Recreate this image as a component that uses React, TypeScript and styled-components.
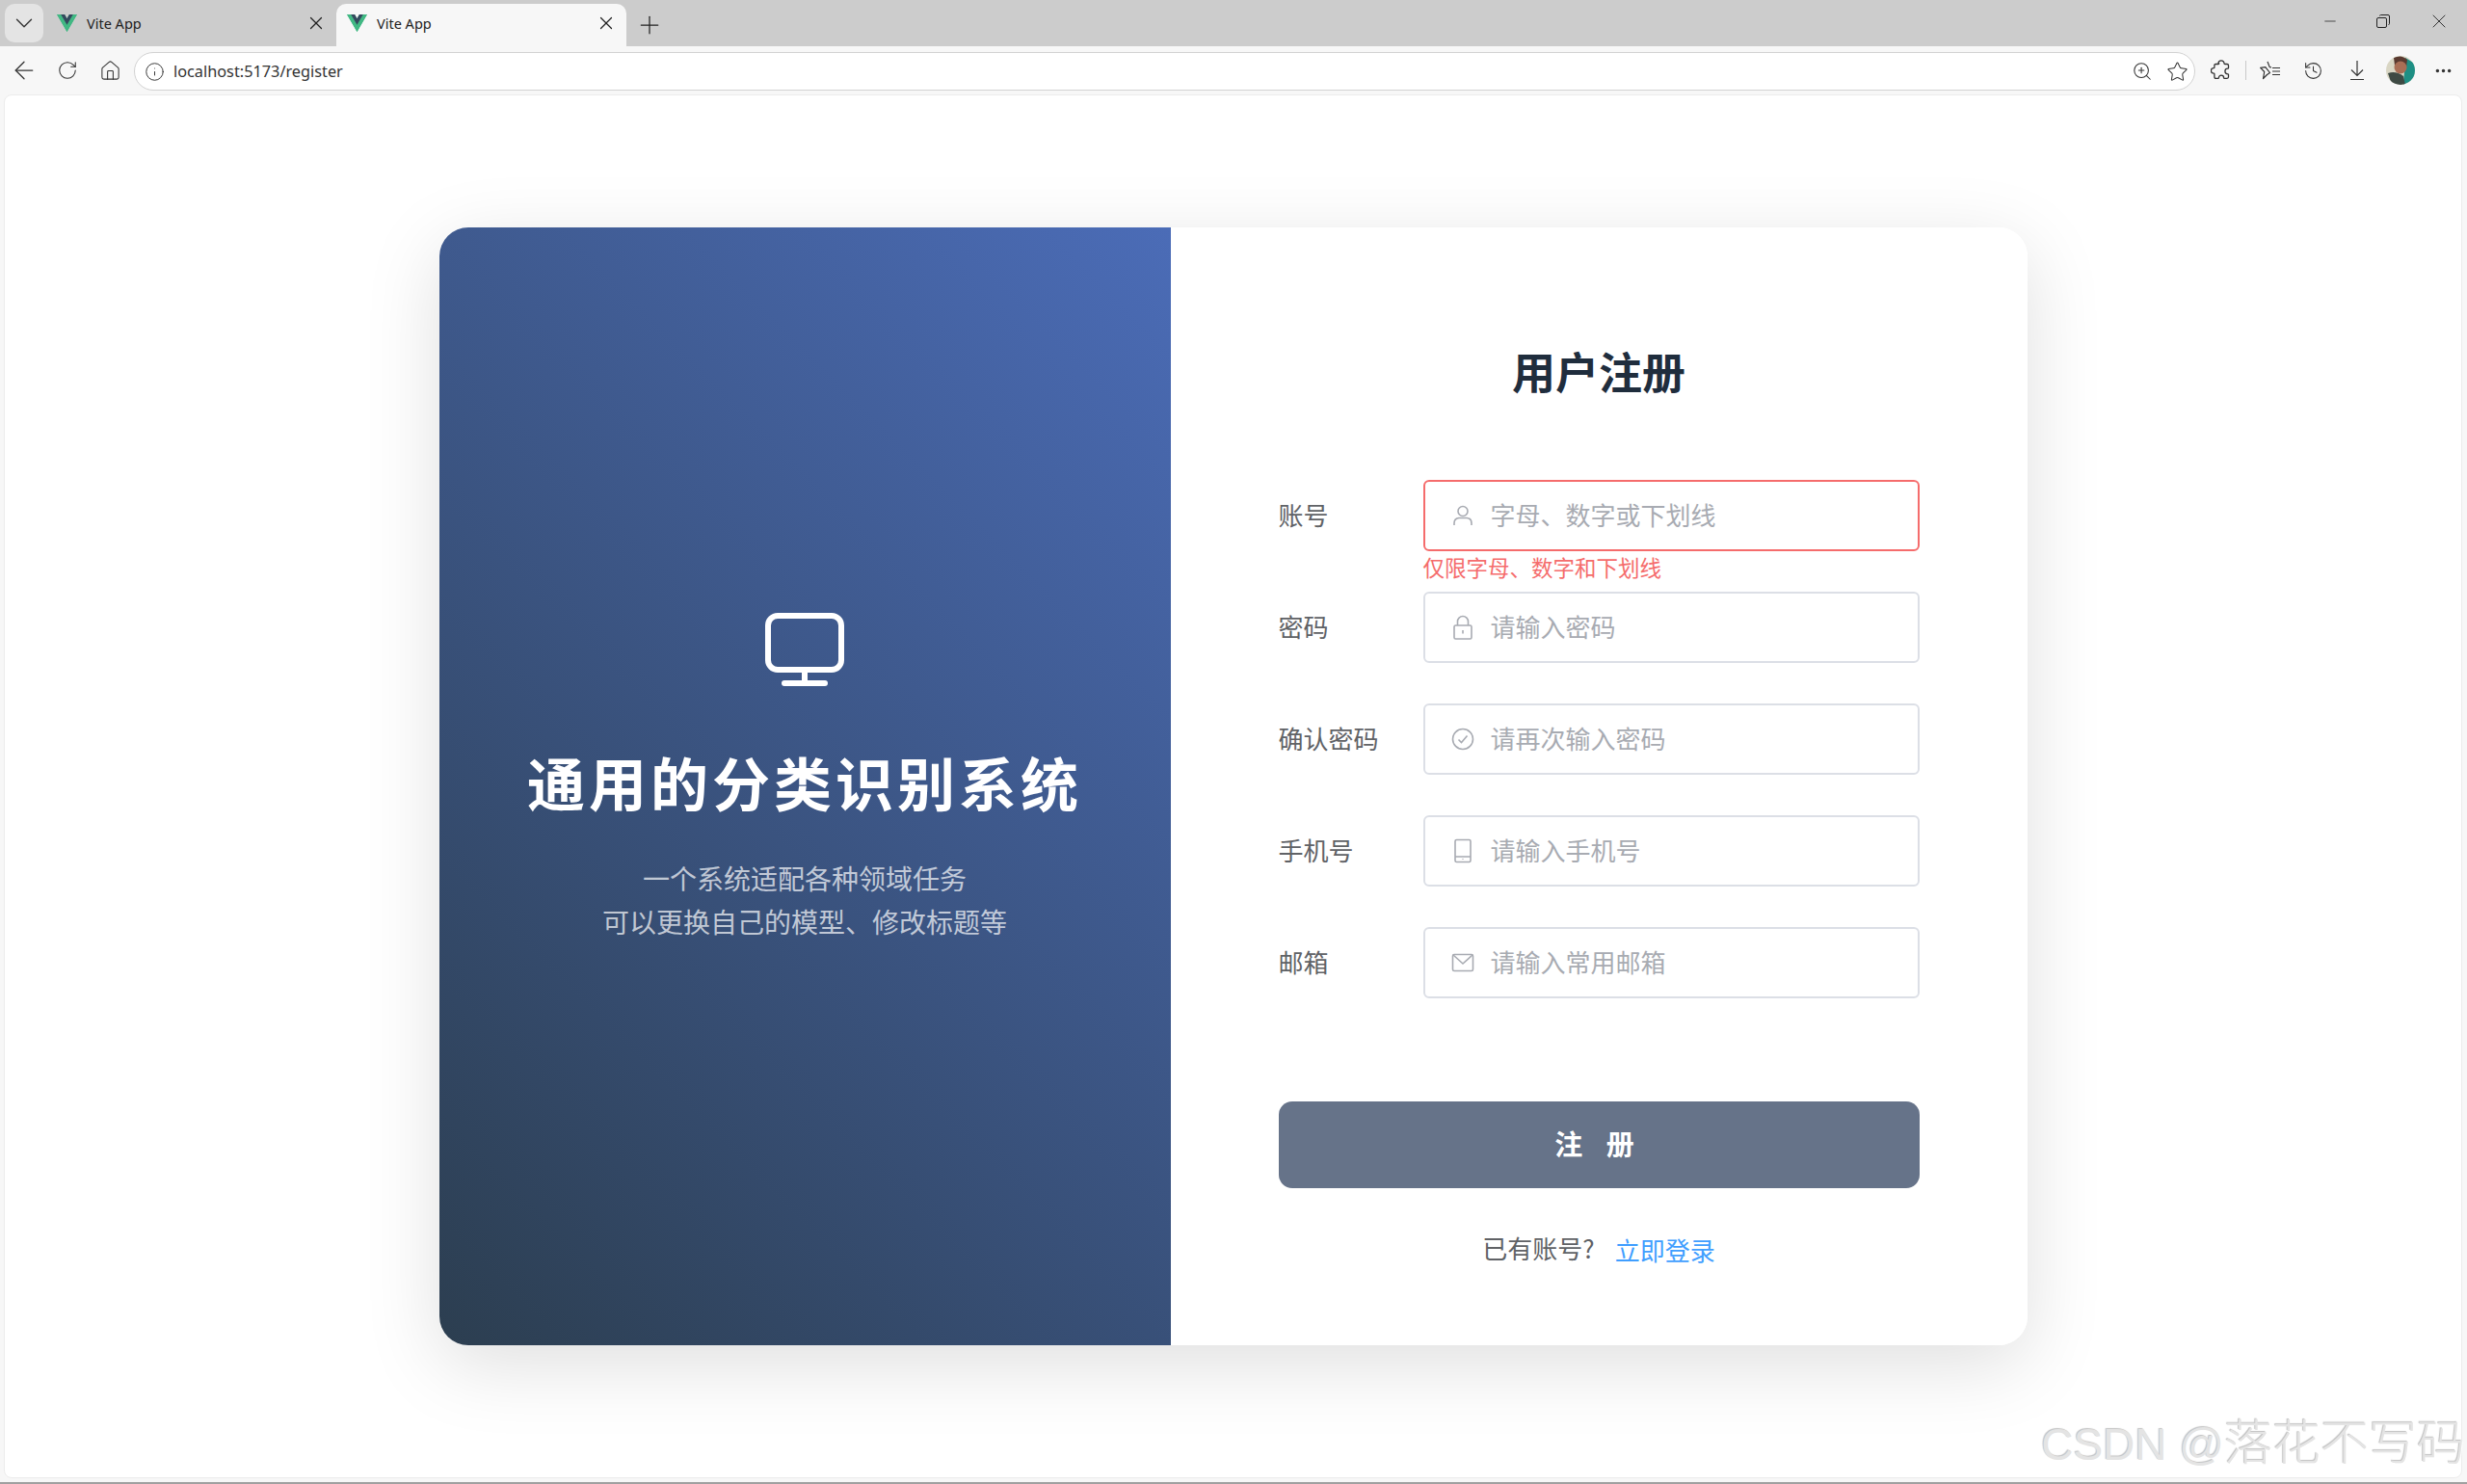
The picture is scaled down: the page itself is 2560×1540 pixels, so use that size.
import React from 'react';
import styled, { createGlobalStyle } from 'styled-components';
import {
  ChevronDown,
  Ellipsis,
  History,
  House,
  Info,
  Minus,
  Plus,
  RotateCw,
  Star,
  X,
  ZoomIn,
  ArrowLeft,
} from 'lucide-react';

const CJK = `"Noto Sans CJK SC", "Noto Sans", sans-serif`;

const GlobalStyle = createGlobalStyle`
  html, body {
    margin: 0;
    padding: 0;
    background: #f7f7f7;
  }
  * {
    box-sizing: border-box;
  }
`;

const Window = styled.div`
  width: 2560px;
  height: 1540px;
  display: flex;
  flex-direction: column;
  overflow: hidden;
  position: relative;
  font-family: ${CJK};
  background: #f7f7f7;
  border-bottom: 2px solid #a0a0a0;
`;

/* browser chrome */
const TabStrip = styled.div`
  height: 48px;
  flex: none;
  background: #cccccc;
  display: flex;
  align-items: flex-end;
  padding-left: 5px;
`;

const TabMenu = styled.div`
  width: 40px;
  height: 40px;
  margin-bottom: 4px;
  margin-right: 3px;
  border-radius: 10px;
  background: #e4e4e4;
  color: #333;
  display: flex;
  align-items: center;
  justify-content: center;
`;

const Tab = styled.div<{ $active?: boolean }>`
  width: 301px;
  height: 44px;
  padding: 0 10px 4px 11px;
  border-radius: 10px 10px 0 0;
  background: ${(p) => (p.$active ? '#f7f7f7' : 'transparent')};
  display: flex;
  align-items: center;
  color: #222;
  font-family: "Noto Sans", sans-serif;
  font-size: 14.5px;
`;

const TabTitle = styled.span`
  margin-left: 10px;
  flex: 1;
`;

const NewTab = styled.div`
  width: 48px;
  height: 44px;
  display: flex;
  align-items: center;
  justify-content: center;
  color: #222;
`;

const WindowButtons = styled.div`
  margin-left: auto;
  height: 48px;
  display: flex;
  align-items: center;
  padding-right: 17px;
  padding-bottom: 4px;
  gap: 38px;
  color: #222;
`;

const Toolbar = styled.div`
  height: 50px;
  flex: none;
  display: flex;
  align-items: center;
  padding-left: 2px;
  color: #333;
`;

const ToolButton = styled.div<{ $w?: number }>`
  width: ${(p) => p.$w || 45}px;
  height: 40px;
  flex: none;
  display: flex;
  align-items: center;
  justify-content: center;
  color: #333;
`;

const NavButtons = styled.div`
  display: flex;
  width: 137px;
  flex: none;
`;

const AddressBar = styled.div`
  width: 2139px;
  height: 40px;
  margin-top: 2px;
  flex: none;
  background: #fff;
  border: 1px solid #d2d2d2;
  border-radius: 20px;
  display: flex;
  align-items: center;
  padding: 0 0 0 10px;
  font-family: "Noto Sans", sans-serif;
  font-size: 16.3px;
  color: #333;
`;

const Url = styled.span`
  margin-left: 9px;
  flex: 1;
`;

const ToolDivider = styled.div`
  width: 1px;
  height: 20px;
  background: #c8c8c8;
  margin: 0 2px 0 3px;
`;

const Avatar = styled.svg`
  width: 30px;
  height: 30px;
  border-radius: 50%;
  display: block;
`;

const ToolbarRight = styled.div`
  display: flex;
  align-items: center;
  margin-left: 5px;
`;

/* page */
const Page = styled.main`
  flex: 1;
  margin: 0 5px 4px 4px;
  background: #fff;
  border-radius: 8px;
  border: 1px solid #ececec;
  display: flex;
  align-items: center;
  justify-content: center;
`;

const Card = styled.div`
  width: 1648px;
  height: 1160px;
  display: flex;
  background: #fff;
  border-radius: 30px;
  overflow: hidden;
`;

const CardShadow = styled.div`
  border-radius: 30px;
  box-shadow: 0 20px 80px rgba(0, 0, 0, 0.13);
`;

const Brand = styled.section`
  width: 759px;
  flex: none;
  padding-bottom: 18px;
  background: linear-gradient(45deg, #2c3e50, #4b6cb7);
  display: flex;
  flex-direction: column;
  align-items: center;
  justify-content: center;
  color: #fff;
`;

const BrandTitle = styled.h1`
  margin: 57px 0 0;
  font-size: 60px;
  line-height: 84px;
  font-weight: 700;
  letter-spacing: 4px;
  white-space: nowrap;
`;

const BrandText = styled.p`
  margin: 36px 0 0;
  font-size: 28px;
  line-height: 45px;
  text-align: center;
  color: rgba(255, 255, 255, 0.7);
`;

const FormSide = styled.section`
  flex: 1;
  padding: 118px 112px 0 112px;
  display: flex;
  flex-direction: column;
`;

const FormTitle = styled.h2`
  margin: 0 0 82px;
  font-size: 45px;
  line-height: 62px;
  font-weight: 700;
  text-align: center;
  color: #1f2d3d;
`;

const Field = styled.div`
  display: flex;
  align-items: center;
  height: 74px;
  margin-bottom: 42px;
  position: relative;
`;

const FieldLabel = styled.label`
  width: 150px;
  flex: none;
  padding-bottom: 3px;
  font-size: 26px;
  color: #606266;
`;

const InputBox = styled.div<{ $error?: boolean }>`
  flex: 1;
  height: 74px;
  display: flex;
  align-items: center;
  gap: 17px;
  padding: 0 27px;
  background: #fff;
  border: 2px solid ${(p) => (p.$error ? '#f56c6c' : '#dcdfe6')};
  border-radius: 6px;
  color: #a8abb2;
`;

const IconSlot = styled.span`
  width: 24px;
  flex: none;
  display: flex;
  justify-content: center;
  align-items: center;
`;

const Input = styled.input`
  flex: 1;
  min-width: 0;
  border: 0;
  outline: 0;
  padding: 0 0 3px;
  background: transparent;
  font-family: ${CJK};
  font-size: 26px;
  color: #606266;

  &::placeholder {
    color: #a8abb2;
    opacity: 1;
  }
`;

const FieldError = styled.div`
  position: absolute;
  left: 150px;
  top: 74px;
  font-size: 22.5px;
  line-height: 32px;
  color: #f56c6c;
`;

const SubmitButton = styled.button`
  height: 90px;
  margin-top: 65px;
  padding-bottom: 5px;
  flex: none;
  border: 0;
  border-radius: 14px;
  background: #667389;
  color: #fff;
  font-family: ${CJK};
  font-size: 29px;
  font-weight: 700;
  letter-spacing: 9px;
`;

const Footer = styled.div`
  margin-top: 44px;
  display: flex;
  justify-content: center;
  align-items: center;
  gap: 21px;
  font-size: 26px;
  line-height: 36px;
  color: #606266;
`;

const LoginLink = styled.a`
  color: #409eff;
  position: relative;
  top: 2px;
`;

const Watermark = styled.div`
  position: absolute;
  right: 2px;
  bottom: 9px;
  font-family: "Liberation Sans", ${CJK};
  font-size: 46px;
  line-height: 60px;
  white-space: nowrap;
  color: #e4e4e4;
  text-shadow: -1px -1px 1px #c2c2c2, 1px 1px 1px #fff;
`;

const WatermarkName = styled.span`
  font-family: ${CJK};
  font-size: 50px;
  font-weight: 300;
`;

const VueLogo = () => (
  <svg width="21" height="18" viewBox="0 0 256 221">
    <path fill="#41B883" d="M204.8 0H256L128 220.8 0 0h97.92L128 51.2 158.72 0h46.08z" />
    <path fill="#41B883" d="M0 0l128 220.8L256 0h-51.2L128 132.48 50.56 0H0z" />
    <path fill="#35495E" d="M50.56 0L128 133.12 204.8 0h-47.36L128 51.2 97.92 0H50.56z" />
  </svg>
);

const RestoreIcon = () => (
  <svg width="16" height="16" viewBox="0 0 16 16" fill="none" stroke="currentColor" strokeWidth="1">
    <rect x="1.5" y="4.5" width="10" height="10" rx="1.5" />
    <path d="M4.5 2.5 q0 -1 1 -1 h7.5 q1.5 0 1.5 1.5 v7.5 q0 1 -1 1" />
  </svg>
);

const ExtensionIcon = () => (
  <svg width="22" height="22" viewBox="0 0 22 22" fill="none" stroke="currentColor" strokeWidth="1.3" strokeLinejoin="round">
    <path d="M8 3.8 a3 3 0 0 1 6 0 q0 .7 .8 .7 h2.2 q1.5 0 1.5 1.5 v2.4 q0 .8 -.8 .8 a2.8 2.8 0 0 0 0 5.6 q.8 0 .8 .8 v2.2 q0 1.5 -1.5 1.5 h-2.6 q-.8 0 -.8 -.6 a2.6 2.6 0 0 0 -5.2 0 q0 .6 -.8 .6 h-2.2 q-1.5 0 -1.5 -1.5 v-3 q0 -.7 -.8 -.7 a2.7 2.7 0 0 1 0 -5.4 q.8 0 .8 -.7 v-2.4 q0 -1.1 1.5 -1.1 h2.6 q.8 0 .8 -.7 z" />
  </svg>
);

const FavoritesIcon = () => (
  <svg width="22" height="20" viewBox="0 0 22 20" fill="none" stroke="currentColor" strokeWidth="1.2" strokeLinejoin="round">
    <path d="M8 1 L10.2 6.6 L12 6.8 M10.5 12.5 L7.5 14.5 L3.5 18.5 L4.7 11.5 L0.7 7.3 L5.8 6.6 Z" />
    <path d="M13 7.5 h8 M13 11 h8 M13 14.5 h8" />
  </svg>
);

const DownloadIcon = () => (
  <svg width="22" height="22" viewBox="0 0 22 22" fill="none" stroke="currentColor" strokeWidth="1.2">
    <path d="M11 1 V16 M5 10.5 L11 16.5 L17 10.5 M4 20.5 H18" />
  </svg>
);

const MonitorIcon = () => (
  <svg width="82" height="76" viewBox="0 0 82 76" fill="none" stroke="#fff" strokeWidth="6" strokeLinecap="round">
    <rect x="3" y="3" width="76" height="56" rx="10" />
    <path d="M41 60 V72 M20 73 H62" />
  </svg>
);

// form field icons, same stroke weight as the element-plus set
const UserIcon = () => (
  <svg width="22" height="24" viewBox="0 0 22 24" fill="none" stroke="currentColor" strokeWidth="1.6">
    <circle cx="11" cy="7.5" r="5" />
    <path d="M2 22 v-2 q0 -5 5 -5.5 h8 q5 0.5 5 5.5 v2" />
  </svg>
);

const LockIcon = () => (
  <svg width="22" height="26" viewBox="0 0 22 26" fill="none" stroke="currentColor" strokeWidth="1.6">
    <rect x="2" y="11" width="18" height="14" rx="1.5" />
    <path d="M5.5 11 V7 a5.5 5.5 0 0 1 11 0 V11 M11 16 v3.5" />
  </svg>
);

const CheckIcon = () => (
  <svg width="24" height="24" viewBox="0 0 24 24" fill="none" stroke="currentColor" strokeWidth="1.6">
    <circle cx="12" cy="12" r="10.5" />
    <path d="M7.5 12.5 l3 3 l6 -7" />
  </svg>
);

const PhoneIcon = () => (
  <svg width="20" height="26" viewBox="0 0 20 26" fill="none" stroke="currentColor" strokeWidth="1.6">
    <rect x="2" y="1.5" width="16" height="23" rx="1.5" />
    <path d="M2 19 h16 M10 21.3 v.8" />
  </svg>
);

const MailIcon = () => (
  <svg width="24" height="20" viewBox="0 0 24 20" fill="none" stroke="currentColor" strokeWidth="1.6">
    <rect x="1.5" y="1.5" width="21" height="17" rx="1.5" />
    <path d="M2 2 l10 9 l10 -9" />
  </svg>
);

const fields = [
  { label: '账号', placeholder: '字母、数字或下划线', icon: <UserIcon />, error: '仅限字母、数字和下划线' },
  { label: '密码', placeholder: '请输入密码', icon: <LockIcon /> },
  { label: '确认密码', placeholder: '请再次输入密码', icon: <CheckIcon /> },
  { label: '手机号', placeholder: '请输入手机号', icon: <PhoneIcon /> },
  { label: '邮箱', placeholder: '请输入常用邮箱', icon: <MailIcon /> },
];

const App = () => {
  return (
    <Window>
      <GlobalStyle />
      <TabStrip>
        <TabMenu>
          <ChevronDown size={30} strokeWidth={1.1} />
        </TabMenu>
        <Tab>
          <VueLogo />
          <TabTitle>Vite App</TabTitle>
          <X size={22} strokeWidth={1.3} />
        </Tab>
        <Tab $active>
          <VueLogo />
          <TabTitle>Vite App</TabTitle>
          <X size={22} strokeWidth={1.3} />
        </Tab>
        <NewTab>
          <Plus size={30} strokeWidth={1} />
        </NewTab>
        <WindowButtons>
          <Minus size={18} strokeWidth={1} />
          <RestoreIcon />
          <X size={24} strokeWidth={0.9} />
        </WindowButtons>
      </TabStrip>

      <Toolbar>
        <NavButtons>
          <ToolButton><ArrowLeft size={30} strokeWidth={1} /></ToolButton>
          <ToolButton><RotateCw size={22} strokeWidth={1.15} /></ToolButton>
          <ToolButton><House size={23} strokeWidth={1.1} /></ToolButton>
        </NavButtons>
        <AddressBar>
          <Info size={21} strokeWidth={1.1} />
          <Url>localhost:5173/register</Url>
          <ToolButton $w={36}><ZoomIn size={22} strokeWidth={1.15} /></ToolButton>
          <ToolButton $w={36}><Star size={23} strokeWidth={1.05} /></ToolButton>
        </AddressBar>
        <ToolbarRight>
          <ToolButton $w={44}><ExtensionIcon /></ToolButton>
          <ToolDivider />
          <ToolButton><FavoritesIcon /></ToolButton>
          <ToolButton><History size={21} strokeWidth={1.2} /></ToolButton>
          <ToolButton><DownloadIcon /></ToolButton>
          <ToolButton>
            <Avatar viewBox="0 0 30 30">
              <rect width="30" height="30" fill="#d9d6c4" />
              <path d="M20 2 L30 8 V24 L18 30 Z" fill="#1e8f84" />
              <path d="M8 2 Q16 -2 22 4 L21 12 Q14 6 9 10 Z" fill="#5a3a30" />
              <circle cx="15" cy="12" r="6.5" fill="#a96e55" />
              <path d="M2 18 Q10 15 18 21 L20 30 H6 Z" fill="#3e4a44" />
            </Avatar>
          </ToolButton>
          <ToolButton><Ellipsis size={21} strokeWidth={2} /></ToolButton>
        </ToolbarRight>
      </Toolbar>

      <Page>
        <CardShadow>
          <Card>
            <Brand>
              <MonitorIcon />
              <BrandTitle>通用的分类识别系统</BrandTitle>
              <BrandText>
                一个系统适配各种领域任务
                <br />
                可以更换自己的模型、修改标题等
              </BrandText>
            </Brand>
            <FormSide>
              <FormTitle>用户注册</FormTitle>
              {fields.map((item) => (
                <Field key={item.label}>
                  <FieldLabel>{item.label}</FieldLabel>
                  <InputBox $error={!!item.error}>
                    <IconSlot>{item.icon}</IconSlot>
                    <Input placeholder={item.placeholder} />
                  </InputBox>
                  {item.error && <FieldError>{item.error}</FieldError>}
                </Field>
              ))}
              <SubmitButton>注 册</SubmitButton>
              <Footer>
                <span>已有账号?</span>
                <LoginLink>立即登录</LoginLink>
              </Footer>
            </FormSide>
          </Card>
        </CardShadow>
      </Page>
      <Watermark>
        CSDN @<WatermarkName>落花不写码</WatermarkName>
      </Watermark>
    </Window>
  );
};

export default App;
